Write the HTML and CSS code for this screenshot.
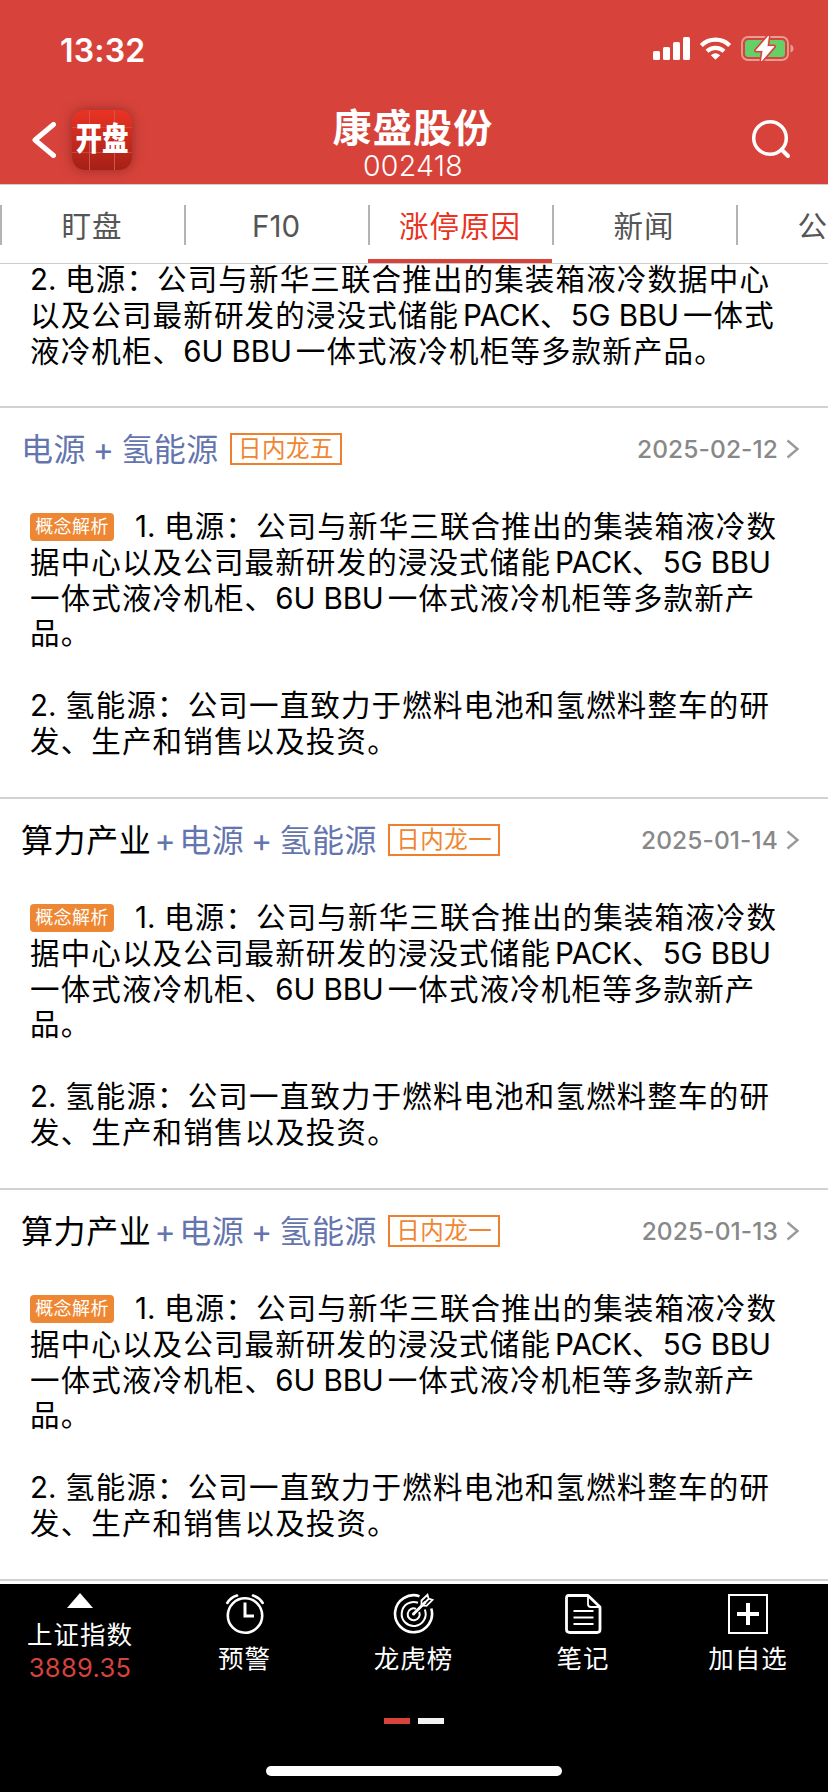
FILE: index.html
```html
<!DOCTYPE html>
<html lang="zh-CN">
<head>
    <meta charset="UTF-8">
    <meta name="viewport" content="width=device-width, initial-scale=1.0">
    <title>康盛股份 002418</title>
    <link rel="stylesheet" href="styles.css">
</head>
<body>
    <div class="app">
        <header class="header">
            <div class="status-bar">
                <span class="time">13:32</span>
                <svg class="status-icons" width="144" height="30" viewBox="0 0 144 30">
                    <g fill="#fff">
                        <rect x="1" y="16" width="7" height="9" rx="1.5"/>
                        <rect x="11" y="12" width="7" height="13" rx="1.5"/>
                        <rect x="21" y="7" width="7" height="18" rx="1.5"/>
                        <rect x="31" y="2" width="7" height="23" rx="1.5"/>
                        <path d="M63.5 24.8 L58.8 20.2 Q63.5 16.4 68.2 20.2 Z"/>
                    </g>
                    <g fill="none" stroke="#fff" stroke-width="4.2">
                        <path d="M49.3 10.4 A20.5 20.5 0 0 1 77.7 10.4"/>
                        <path d="M55 16.2 A12.3 12.3 0 0 1 72 16.2"/>
                    </g>
                    <rect x="90" y="2" width="46" height="23" rx="6" fill="none" stroke="#e79c97" stroke-width="1.8"/>
                    <path d="M138.5 9.5 Q141.5 10.5 141.5 13.5 Q141.5 16.5 138.5 17.5 Z" fill="#e79c97"/>
                    <rect x="93" y="5" width="40" height="17" rx="3.5" fill="#65cf68"/>
                    <path d="M116.5 1 L104 15.5 H111 L109.5 26 L122 11.5 H115 Z" fill="#fff" stroke="#d7433b" stroke-width="4" stroke-linejoin="round"/>
                    <path d="M116.5 1 L104 15.5 H111 L109.5 26 L122 11.5 H115 Z" fill="#fff" stroke="#fff" stroke-width="0.8" stroke-linejoin="round"/>
                </svg>
            </div>
            <div class="nav-bar">
                <div class="nav-left">
                    <svg class="back" width="24" height="36" viewBox="0 0 24 36">
                        <path d="M21.5 2.5 L3 18 L21.5 33.5" fill="none" stroke="#fff" stroke-width="5" stroke-linecap="round" stroke-linejoin="round"/>
                    </svg>
                    <div class="logo"><span>开盘</span></div>
                </div>
                <div class="nav-title">
                    <h1>康盛股份</h1>
                    <p>002418</p>
                </div>
                <svg class="search" width="42" height="42" viewBox="0 0 42 42">
                    <circle cx="20" cy="20" r="16.3" fill="none" stroke="#fff" stroke-width="3.5"/>
                    <path d="M31.5 31.5 L38 38" stroke="#fff" stroke-width="4" stroke-linecap="round"/>
                </svg>
            </div>
        </header>

        <nav class="tabs">
            <a class="tab">盯盘</a>
            <a class="tab"><span class="f10">F10</span></a>
            <a class="tab active">涨停原因</a>
            <a class="tab">新闻</a>
            <a class="tab">公告</a>
        </nav>

        <main class="list">
            <section class="item item-first">
                <div class="content">
                    <p><span class="num">2. </span>电源：公司与新华三联合推出的集装箱液冷数据中心<br>以及公司最新研发的浸没式储能<span class="en gap-l">PACK</span>、<span class="en gap-r">5G BBU</span>一体式<br>液冷机柜、<span class="en gap-r">6U BBU</span>一体式液冷机柜等多款新产品。</p>
                </div>
            </section>

            <section class="item">
                <div class="item-head">
                    <h2 class="topic"><span class="link">电源 + 氢能源</span></h2>
                    <span class="rank">日内龙五</span>
                    <span class="date">2025-02-12</span>
                    <svg class="arrow" width="14" height="20" viewBox="0 0 14 20"><path d="M1.5 1.5 L11.5 10 L1.5 18.5" fill="none" stroke="#999" stroke-width="2.4"/></svg>
                </div>
                <div class="content">
                    <p><span class="label">概念解析</span><span class="num">1. </span>电源：公司与新华三联合推出的集装箱液冷数<br>据中心以及公司最新研发的浸没式储能<span class="en gap-l">PACK</span>、<span class="en">5G BBU</span><br>一体式液冷机柜、<span class="en gap-r">6U BBU</span>一体式液冷机柜等多款新产<br>品。</p>
                    <p><span class="num">2. </span>氢能源：公司一直致力于燃料电池和氢燃料整车的研<br>发、生产和销售以及投资。</p>
                </div>
            </section>

            <section class="item">
                <div class="item-head">
                    <h2 class="topic">算力产业<span class="link"><span class="plus">+</span>电源 + 氢能源</span></h2>
                    <span class="rank">日内龙一</span>
                    <span class="date">2025-01-14</span>
                    <svg class="arrow" width="14" height="20" viewBox="0 0 14 20"><path d="M1.5 1.5 L11.5 10 L1.5 18.5" fill="none" stroke="#999" stroke-width="2.4"/></svg>
                </div>
                <div class="content">
                    <p><span class="label">概念解析</span><span class="num">1. </span>电源：公司与新华三联合推出的集装箱液冷数<br>据中心以及公司最新研发的浸没式储能<span class="en gap-l">PACK</span>、<span class="en">5G BBU</span><br>一体式液冷机柜、<span class="en gap-r">6U BBU</span>一体式液冷机柜等多款新产<br>品。</p>
                    <p><span class="num">2. </span>氢能源：公司一直致力于燃料电池和氢燃料整车的研<br>发、生产和销售以及投资。</p>
                </div>
            </section>

            <section class="item">
                <div class="item-head">
                    <h2 class="topic">算力产业<span class="link"><span class="plus">+</span>电源 + 氢能源</span></h2>
                    <span class="rank">日内龙一</span>
                    <span class="date">2025-01-13</span>
                    <svg class="arrow" width="14" height="20" viewBox="0 0 14 20"><path d="M1.5 1.5 L11.5 10 L1.5 18.5" fill="none" stroke="#999" stroke-width="2.4"/></svg>
                </div>
                <div class="content">
                    <p><span class="label">概念解析</span><span class="num">1. </span>电源：公司与新华三联合推出的集装箱液冷数<br>据中心以及公司最新研发的浸没式储能<span class="en gap-l">PACK</span>、<span class="en">5G BBU</span><br>一体式液冷机柜、<span class="en gap-r">6U BBU</span>一体式液冷机柜等多款新产<br>品。</p>
                    <p><span class="num">2. </span>氢能源：公司一直致力于燃料电池和氢燃料整车的研<br>发、生产和销售以及投资。</p>
                </div>
            </section>
        </main>

        <footer class="footer">
            <div class="toolbar">
                <div class="index">
                    <svg width="26" height="15" viewBox="0 0 26 15"><path d="M13 0 L26 15 H0 Z" fill="#fff"/></svg>
                    <span class="index-name">上证指数</span>
                    <span class="index-value">3889.35</span>
                </div>
                <div class="tool">
                    <svg width="42" height="42" viewBox="0 0 42 42" fill="none" stroke="#fff" stroke-width="2.6" stroke-linecap="round">
                        <circle cx="21" cy="22.5" r="17.2"/>
                        <path d="M21 9.5 V23 H30" stroke-linecap="butt" stroke-width="3"/>
                        <path d="M3.3 10 Q6.5 4.5 13 2.5 M38.7 10 Q35.5 4.5 29 2.5"/>
                    </svg>
                    <span>预警</span>
                </div>
                <div class="tool">
                    <svg width="42" height="42" viewBox="0 0 42 42" fill="none" stroke="#fff" stroke-width="2.6">
                        <path d="M26.5 3.2 A18.5 18.5 0 1 0 38.3 15.5"/>
                        <path d="M25 9.8 A12 12 0 1 0 31.8 16.5" stroke-width="2"/>
                        <path d="M23 15.8 A6 6 0 1 0 26.2 19" stroke-width="2"/>
                        <circle cx="20.5" cy="21" r="1.5" fill="#fff" stroke="none"/>
                        <path d="M20.5 21 L32.5 9" stroke-width="2.8"/>
                        <path d="M28.5 12.5 V7.5 L34.5 1.8 L35.5 5.5 L39.5 6.8 L33.5 12.8 Z M31.5 10 L36 5.5" stroke-width="1.8"/>
                    </svg>
                    <span>龙虎榜</span>
                </div>
                <div class="tool">
                    <svg width="42" height="42" viewBox="0 0 42 42" fill="none" stroke="#fff" stroke-width="2.8" stroke-linejoin="round">
                        <path d="M6.5 2.5 H26 L38 14 V36.5 Q38 39.5 35 39.5 H8 Q4.5 39.5 4.5 36.5 V5 Q4.5 2.5 6.5 2.5 Z"/>
                        <path d="M26 3 V11 Q26 14 29 14 H38" stroke-width="1.8"/>
                        <path d="M11.5 18 H31.5 M11.5 24.5 H31.5 M11.5 31 H31.5" stroke-width="2"/>
                    </svg>
                    <span>笔记</span>
                </div>
                <div class="tool">
                    <svg width="42" height="42" viewBox="0 0 42 42" fill="none" stroke="#fff">
                        <rect x="2" y="2" width="38" height="38" stroke-width="2"/>
                        <path d="M21 10 V32 M10 21 H32" stroke-width="4"/>
                    </svg>
                    <span>加自选</span>
                </div>
            </div>
            <div class="pager"><i class="dot on"></i><i class="dot"></i></div>
            <div class="home-bar"></div>
        </footer>
    </div>
</body>
</html>
```
FILE: styles.css
```css
* {
    box-sizing: border-box;
}

body {
    margin: 0;
    padding: 0;
    background: #fff;
    color: #000;
    font-family: Inter, "Noto Sans CJK SC", sans-serif;
    overflow: hidden;
}

h1, h2, p {
    margin: 0;
    font-weight: normal;
}

svg {
    display: block;
}

.app {
    width: 828px;
    height: 1792px;
    display: flex;
    flex-direction: column;
    overflow: hidden;
}

/* header */
.header {
    height: 184px;
    flex: none;
    background: #d7433b;
    color: #fff;
}

.status-bar {
    height: 96px;
    padding: 4px 32px 0 60px;
    display: flex;
    align-items: center;
    justify-content: space-between;
}

.time {
    font-size: 32px;
    font-weight: 600;
    letter-spacing: 0.2px;
}

.nav-bar {
    height: 88px;
    padding: 0 34px 0 32px;
    display: grid;
    grid-template-columns: 200px 1fr 200px;
}

.nav-left {
    display: flex;
    align-items: center;
    gap: 16px;
}

.logo {
    width: 60px;
    height: 60px;
    border-radius: 13px;
    background:
        linear-gradient(90deg, transparent 17px, #d9504a 17px, #d9504a 18px, transparent 18px, transparent 42px, #d9504a 42px, #d9504a 43px, transparent 43px),
        linear-gradient(transparent 17px, #d04a40 17px, #d04a40 18px, transparent 18px, transparent 42px, #c34840 42px, #c34840 43px, transparent 43px),
        linear-gradient(#ea3323, #a52017);
    box-shadow: 0 0 12px rgba(90, 20, 15, 0.5);
    display: flex;
    align-items: center;
    justify-content: center;
    font-size: 32px;
    font-weight: 900;
    line-height: 60px;
}

.logo span {
    transform: scaleX(0.83);
    white-space: nowrap;
    padding-bottom: 3px;
}

.nav-title {
    text-align: center;
    padding-top: 9px;
}

.nav-title h1 {
    font-size: 39px;
    line-height: 46px;
    font-weight: 600;
    letter-spacing: 1.3px;
}

.nav-title p {
    font-size: 28.5px;
    line-height: 29px;
    font-weight: 300;
    letter-spacing: 0.3px;
}

.search {
    justify-self: end;
    align-self: center;
    margin: 0 2px 2px 0;
}

/* tabs */
.tabs {
    height: 80px;
    flex: none;
    display: flex;
    border-top: 1px solid #ccc;
    border-bottom: 1px solid #ccc;
}

.tab {
    flex: none;
    width: 184px;
    display: flex;
    align-items: center;
    justify-content: center;
    position: relative;
    color: #555;
    font-size: 29.5px;
    letter-spacing: 1px;
}

.f10 {
    letter-spacing: 0;
    padding-top: 3px;
}

.tab::before {
    content: "";
    position: absolute;
    left: 0;
    top: 20px;
    width: 2px;
    height: 40px;
    background: #b3b3b3;
}

.tab.active {
    color: #ea3323;
}

.tab.active::after {
    content: "";
    position: absolute;
    left: 0;
    right: 0;
    bottom: 0;
    height: 4px;
    background: #d7433b;
}

/* list */
.list {
    flex: 1;
    min-height: 0;
}

.item {
    height: 391px;
    border-bottom: 2px solid #d2d2d2;
}

.item-head {
    height: 82px;
    padding: 0 28px 0 21px;
    display: flex;
    align-items: center;
}

.topic {
    font-size: 32px;
    letter-spacing: 0.6px;
    word-spacing: -3px;
    white-space: nowrap;
    padding-bottom: 4px;
}

.link {
    color: #6475ae;
}

.plus {
    margin: 0 3px;
}

.rank {
    width: 112px;
    height: 32px;
    margin-left: 11px;
    border: 2px solid #ee7f2e;
    color: #f08632;
    font-size: 23.5px;
    line-height: 28px;
    letter-spacing: 0.5px;
    text-align: center;
    white-space: nowrap;
}

.date {
    margin-left: auto;
    color: #888;
    font-size: 24.5px;
    font-weight: 500;
    letter-spacing: 0.1px;
}

.arrow {
    margin-left: 8px;
}

.content {
    padding: 19px 0 0 30px;
    font-size: 29.5px;
    line-height: 35.8px;
    letter-spacing: 1.15px;
    white-space: nowrap;
}

.item-first {
    height: 146px;
    margin-top: -2px;
}

.item-first .content {
    padding-top: 0;
}

.content p + p {
    margin-top: 35.8px;
}

.en {
    letter-spacing: -0.1px;
}

.gap-l {
    margin-left: 4px;
}

.gap-r {
    margin-right: 4px;
}

.num {
    letter-spacing: 0.1px;
}

.label {
    display: inline-block;
    width: 84px;
    height: 28px;
    margin: 0 21px 0 0;
    vertical-align: 4px;
    border-radius: 4px;
    background: #ee8733;
    color: #fff;
    font-size: 18px;
    line-height: 27px;
    letter-spacing: 0.4px;
    text-align: center;
}

/* footer */
.footer {
    height: 208px;
    flex: none;
    background: #000;
    color: #fff;
    display: flex;
    flex-direction: column;
    align-items: center;
}

.toolbar {
    width: 100%;
    height: 134px;
    padding: 9px 0 0 0;
    display: grid;
    grid-template-columns: 160px 169px 169px 170px 160px;
}

.index, .tool {
    display: flex;
    flex-direction: column;
    align-items: center;
    font-size: 25.5px;
    letter-spacing: 1px;
    white-space: nowrap;
}

.tool span {
    line-height: 36px;
    margin-top: 6px;
}

.index-name {
    line-height: 34px;
    margin-top: 10px;
}

.index-value {
    line-height: 32px;
    color: #d7433b;
    letter-spacing: 0.3px;
}

.pager {
    display: flex;
    gap: 8px;
}

.dot {
    width: 26px;
    height: 6px;
    background: #f2f2f2;
}

.dot.on {
    background: #d7433b;
}

.home-bar {
    width: 296px;
    height: 10px;
    margin-top: 42px;
    border-radius: 5px;
    background: #fff;
}
```
